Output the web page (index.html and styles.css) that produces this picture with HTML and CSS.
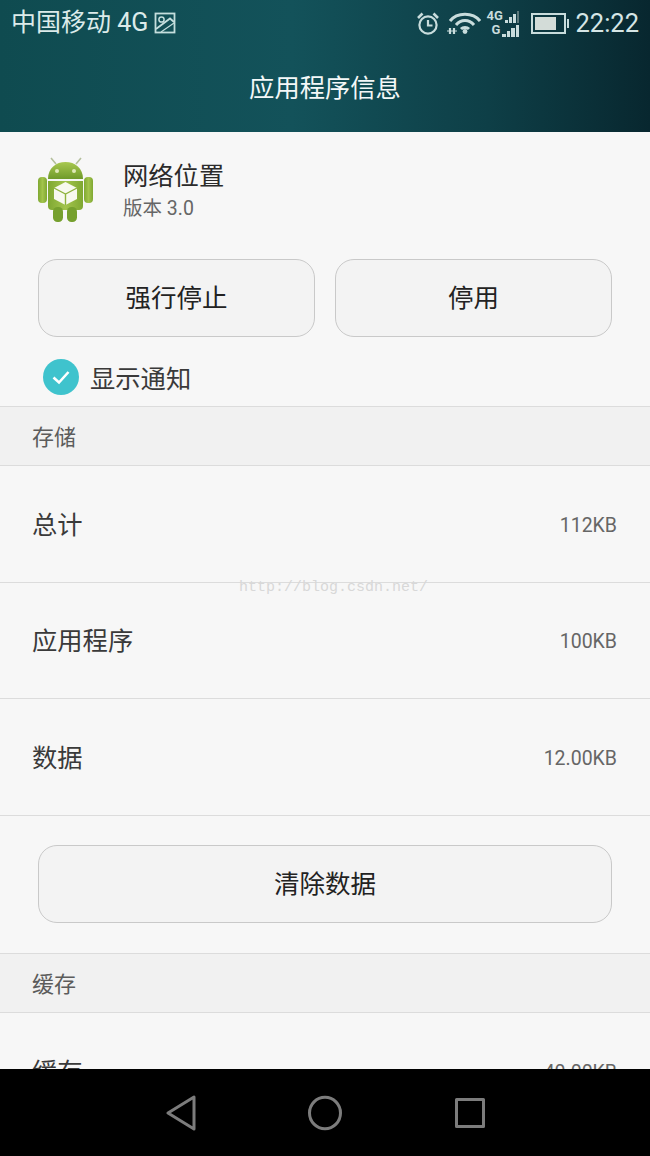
FILE: index.html
```html
<!DOCTYPE html>
<html lang="zh">
<head>
<meta charset="utf-8">
<title>应用程序信息</title>
<link rel="stylesheet" href="styles.css">
</head>
<body>
<div class="phone">
  <header class="header">
    <div class="status">
      <div class="status-left">
        <span class="carrier">中国移动 4G</span>
        <svg class="pic" width="22" height="22" viewBox="0 0 22 22" fill="none" stroke="#c4dedd" stroke-width="1.8"><rect x="1.5" y="1.5" width="19" height="19"/><circle cx="7.5" cy="7.5" r="2.6" stroke-width="1.5"/><path d="M2 17 L16 6.5 L20 10"/><path d="M7 20 L20 11" stroke-width="1.2"/></svg>
      </div>
      <div class="status-right">
        <svg class="alarm" width="24" height="24" viewBox="0 0 24 24" fill="none" stroke="#c8dcdc" stroke-width="2.2"><circle cx="12" cy="14" r="8.6"/><path d="M12 9 V14.5 H16.5"/><path d="M2 7 L6.5 2.5 M22 7 L17.5 2.5" stroke-width="2.6"/></svg>
        <svg class="wifi" width="34" height="24" viewBox="0 0 34 24" fill="none" stroke="#c8dcdc" stroke-width="3"><path d="M3 10 C10 1 26 1 33 10"/><path d="M9 14 C14 8 22 8 27 14"/><path d="M14 18 C16 16 20 16 22 18"/><circle cx="18" cy="20.5" r="2.4" fill="#c8dcdc" stroke="none"/><path d="M0 20 H10" stroke-width="1"/><path d="M3 17 V23 M7 17 V23" stroke-width="2.2"/></svg>
        <div class="signal">
          <div class="signal-row"><span class="net">4G</span><i class="bar b1"></i><i class="bar b2"></i><i class="bar b3"></i><i class="bar b4 dim"></i></div>
          <div class="signal-row"><span class="net">G</span><i class="bar b1"></i><i class="bar b2"></i><i class="bar b3"></i><i class="bar b4"></i></div>
        </div>
        <div class="battery"><div class="battery-fill"></div></div>
        <span class="clock">22:22</span>
      </div>
    </div>
    <h1 class="title">应用程序信息</h1>
  </header>

  <main class="content">
    <section class="app">
      <div class="app-head">
        <svg class="app-icon" width="56" height="66" viewBox="0 0 56 66">
          <defs>
            <linearGradient id="g" x1="0" y1="0" x2="0" y2="1"><stop offset="0" stop-color="#a8c850"/><stop offset="1" stop-color="#6f9a2a"/></linearGradient>
            <linearGradient id="h" x1="0" y1="0" x2="1" y2="0"><stop offset="0" stop-color="#7fa832"/><stop offset="0.5" stop-color="#a3c44c"/><stop offset="1" stop-color="#7fa832"/></linearGradient>
          </defs>
          <path d="M18 7 L13 1 M38 7 L43 1" stroke="#b4bf9c" stroke-width="1.6"/>
          <path d="M10 22 C10 11 18 5 27.5 5 C37 5 45 11 45 22 Z" fill="url(#g)"/>
          <circle cx="19" cy="14" r="2" fill="#dfe9b8"/>
          <circle cx="36" cy="14" r="2" fill="#dfe9b8"/>
          <path d="M10 24 H45 V49 Q45 53 41 53 H14 Q10 53 10 49 Z" fill="url(#h)"/>
          <rect x="0" y="20" width="9" height="26" rx="4" fill="url(#h)"/>
          <rect x="46" y="20" width="9" height="26" rx="4" fill="url(#h)"/>
          <rect x="15" y="50" width="10" height="15" rx="4.5" fill="#76a02e"/>
          <rect x="29" y="50" width="10" height="15" rx="4.5" fill="#76a02e"/>
          <path d="M27.5 25 L39 31 V42 L27.5 48 L16 42 V31 Z" fill="#f8f9f0"/>
          <path d="M16 31 L27.5 37 L39 31 M27.5 37 V48" fill="none" stroke="#8fb33e" stroke-width="1.4"/>
        </svg>
        <div class="app-text">
          <div class="app-name">网络位置</div>
          <div class="app-version">版本 3.0</div>
        </div>
      </div>
      <div class="actions">
        <button class="btn">强行停止</button>
        <button class="btn">停用</button>
      </div>
      <div class="notify">
        <svg class="check" width="36" height="36" viewBox="0 0 36 36"><circle cx="18" cy="18" r="18" fill="#3fc3cd"/><path d="M10.5 18.5 L16 23.5 L25.5 13" fill="none" stroke="#fff" stroke-width="2.6"/></svg>
        <span class="notify-label">显示通知</span>
      </div>
    </section>

    <div class="section-head">存储</div>
    <div class="row"><span class="row-label">总计</span><span class="row-value">112KB</span></div>
    <div class="row"><span class="row-label">应用程序</span><span class="row-value">100KB</span></div>
    <div class="row"><span class="row-label">数据</span><span class="row-value">12.00KB</span></div>
    <div class="clear"><button class="btn btn-wide">清除数据</button></div>
    <div class="section-head">缓存</div>
    <div class="row"><span class="row-label">缓存</span><span class="row-value">40.00KB</span></div>
    <div class="watermark">http://blog.csdn.net/</div>
  </main>

  <nav class="nav">
    <svg width="36" height="36" viewBox="0 0 36 36" fill="none" stroke="#7c7c7c" stroke-width="3" stroke-linejoin="round"><path d="M31 2 V34 L5 18 Z"/></svg>
    <svg width="36" height="36" viewBox="0 0 36 36" fill="none" stroke="#7c7c7c" stroke-width="3"><ellipse cx="18" cy="18" rx="15.5" ry="15.8"/></svg>
    <svg width="36" height="36" viewBox="0 0 36 36" fill="none" stroke="#7c7c7c" stroke-width="3" stroke-linejoin="round"><rect x="5.5" y="4.5" width="27" height="27"/></svg>
  </nav>
</div>
</body>
</html>
```

FILE: styles.css
```css
* { box-sizing: border-box; }
html, body { margin: 0; padding: 0; }
body {
  font-family: "Roboto", "Noto Sans CJK SC", sans-serif;
  background: #000;
}
.phone {
  width: 650px;
  height: 1156px;
  display: flex;
  flex-direction: column;
  overflow: hidden;
}
.header {
  height: 132px;
  flex: none;
  color: #fff;
  background: linear-gradient(90deg, #0f4b50 0%, #13525a 45%, #0e3f47 75%, #08272f 100%);
  display: flex;
  flex-direction: column;
}
.status {
  height: 46px;
  padding: 0 11px;
  display: flex;
  align-items: center;
  justify-content: space-between;
  color: #dcebea;
}
.status-left { display: flex; align-items: center; gap: 6px; }
.carrier { font-size: 25px; line-height: 46px; }
.status-right { display: flex; align-items: center; }
.wifi { margin-left: 7px; }
.signal { width: 33px; margin-left: 5px; display: flex; flex-direction: column; gap: 1px; }
.signal-row { display: flex; align-items: flex-end; justify-content: flex-end; gap: 1px; height: 13px; }
.net { font-size: 13px; font-weight: 700; line-height: 12px; margin-right: 1px; align-self: flex-start; color: #c8dcdc; }
.bar { display: block; width: 3.5px; background: #c8dcdc; }
.b1 { height: 3px; }
.b2 { height: 6px; }
.b3 { height: 9px; }
.b4 { height: 12px; }
.dim { background: #5d7a7c; }
.battery {
  width: 35px;
  height: 21px;
  margin-left: 12px;
  border: 2px solid #c8dcdc;
  padding: 2px 8px 2px 2px;
  position: relative;
}
.battery::after {
  content: "";
  position: absolute;
  right: -5px;
  top: 4px;
  width: 2px;
  height: 9px;
  background: #c8dcdc;
}
.battery-fill { height: 100%; background: #d3dcd8; }
.clock { font-size: 25.5px; margin-left: 9px; color: #d6e6e6; }
.title {
  margin: 0;
  font-size: 25.3px;
  font-weight: 400;
  line-height: 34px;
  text-align: center;
  padding-top: 26px;
  color: #f4f8f8;
}
.content {
  position: relative;
  flex: none;
  height: 937px;
  overflow: hidden;
  background: #f7f7f7;
  color: #333;
}
.app { height: 274px; padding: 25px 38px 0; }
.app-head { display: flex; align-items: flex-start; gap: 29px; height: 102px; }
.app-icon { flex: none; }
.app-text { padding-top: 3px; }
.app-name { font-size: 25.3px; line-height: 34px; color: #2b2b2b; }
.app-version { font-size: 19.5px; line-height: 28px; margin-top: 1px; color: #666; }
.actions { display: flex; gap: 20px; }
.btn {
  flex: 1;
  height: 78px;
  border: 1px solid #c9c9c9;
  border-radius: 19px;
  background: #f3f3f3;
  font-family: inherit;
  font-size: 25.5px;
  color: #222;
  padding: 0 0 6px;
}
.notify { display: flex; align-items: center; gap: 11px; margin: 22px 0 0 5px; height: 36px; }
.check { flex: none; }
.notify-label { font-size: 25.3px; line-height: 36px; padding-top: 6px; color: #3a3a3a; }
.section-head {
  height: 60px;
  padding: 0 32px 2px;
  display: flex;
  align-items: center;
  font-size: 22px;
  color: #5c5c5c;
  background: #f1f1f1;
  border-top: 1px solid #dcdcdc;
  border-bottom: 1px solid #dcdcdc;
}
.row {
  height: 116.5px;
  padding: 0 33px 0 32px;
  display: flex;
  align-items: center;
  justify-content: space-between;
  border-bottom: 1px solid #dcdcdc;
}
.row-label { font-size: 25.3px; line-height: 36px; padding-top: 4px; color: #3a3a3a; }
.row-value { font-size: 19.5px; line-height: 26px; padding-top: 4px; color: #666; }
.clear { height: 137.5px; padding: 29.5px 38px 0; display: flex; align-items: flex-start; }
.btn-wide { width: 100%; }
.watermark {
  position: absolute;
  left: 239px;
  top: 446px;
  font-family: "Liberation Mono", monospace;
  font-size: 15px;
  line-height: 20px;
  color: #d8d8d8;
}
.nav {
  flex: 1;
  background: #000;
  display: flex;
  align-items: center;
  justify-content: center;
  gap: 108px;
}
```
